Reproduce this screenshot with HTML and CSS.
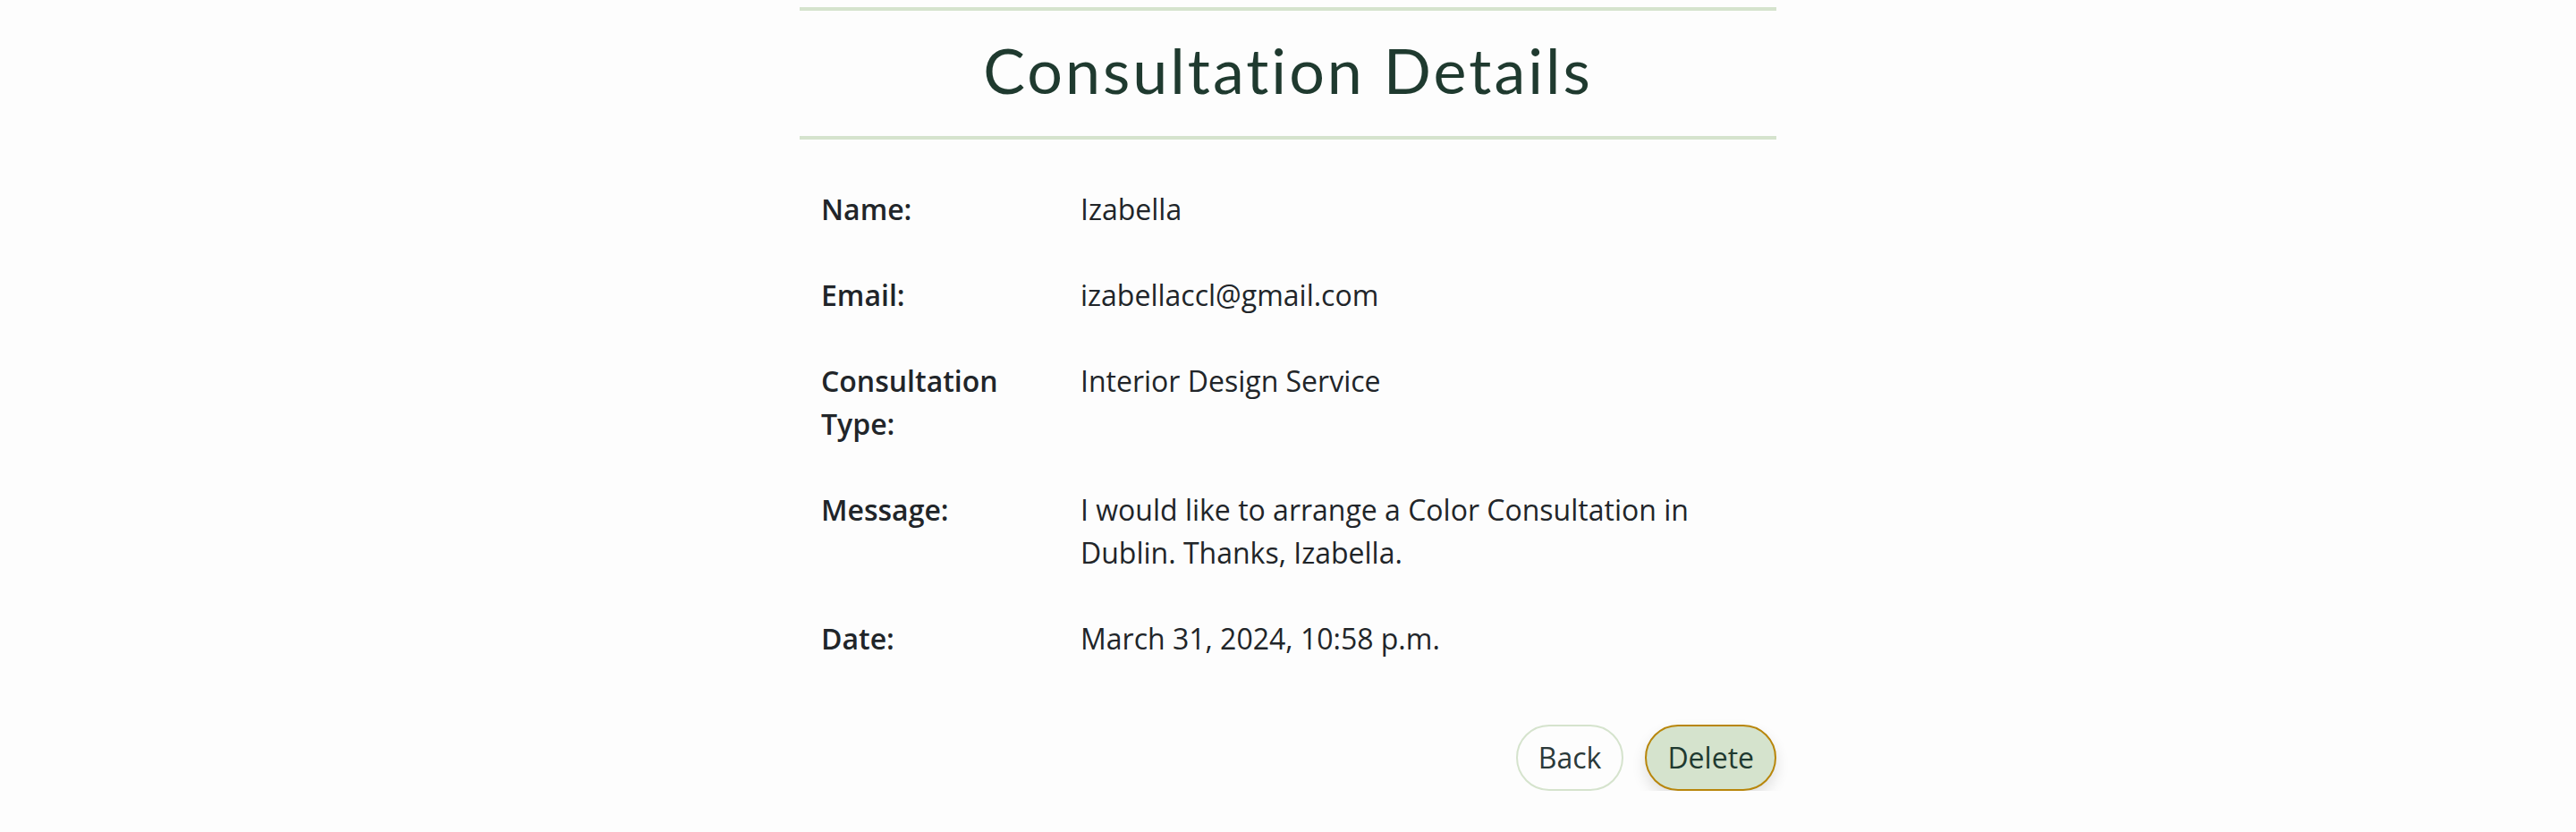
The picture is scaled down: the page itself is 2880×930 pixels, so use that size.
FILE: index.html
```html
<!DOCTYPE html>
<html lang="en">
<head>
<meta charset="utf-8">
<title>Consultation Details</title>
<link rel="stylesheet" href="styles.css">
</head>
<body>
<main class="page">
  <header class="title-bar">
    <h1 class="title">Consultation Details</h1>
  </header>
  <section class="details">
    <div class="row">
      <div class="label">Name:</div>
      <div class="value">Izabella</div>
    </div>
    <div class="row">
      <div class="label">Email:</div>
      <div class="value">izabellaccl@gmail.com</div>
    </div>
    <div class="row">
      <div class="label">Consultation Type:</div>
      <div class="value">Interior Design Service</div>
    </div>
    <div class="row">
      <div class="label">Message:</div>
      <div class="value">I would like to arrange a Color Consultation in Dublin. Thanks, Izabella.</div>
    </div>
    <div class="row">
      <div class="label">Date:</div>
      <div class="value">March 31, 2024, 10:58 p.m.</div>
    </div>
  </section>
  <div class="actions">
    <a class="btn btn-back" href="#">Back</a>
    <a class="btn btn-delete" href="#">Delete</a>
  </div>
</main>
</body>
</html>
```

FILE: styles.css
```css
html, body {
  margin: 0;
  padding: 0;
  background: #fdfdfd;
}

body {
  padding-top: 8px;
  font-family: "Open Sans", "Noto Sans", sans-serif;
  font-size: 32px;
  line-height: 48px;
  color: #212529;
}

.page {
  width: 1092px;
  margin: 0 auto;
}

.title-bar {
  border-top: 4px solid #d5e3cd;
  border-bottom: 4px solid #d5e3cd;
  height: 140px;
  display: flex;
  align-items: center;
  justify-content: center;
}

.title {
  margin: 0;
  font-family: "Lato", sans-serif;
  font-weight: 400;
  font-size: 70px;
  line-height: 80px;
  letter-spacing: 3px;
  color: #1f3a2f;
  padding-bottom: 8px;
}

.details {
  padding: 30px 24px 0;
}

.row {
  display: grid;
  grid-template-columns: 290px 1fr;
  padding: 24px 0;
}

.label {
  font-weight: 600;
  padding-right: 24px;
}

.value {
  font-weight: 400;
}

.actions {
  display: flex;
  justify-content: flex-end;
  gap: 24px;
  margin-top: 48px;
}

.btn {
  display: inline-block;
  text-decoration: none;
  font-size: 32px;
  line-height: 46px;
  padding: 12px 23px;
  border-radius: 37px;
  border: 2px solid #d5e3cd;
  color: #2b3a3a;
}

.btn-back {
  background: #fdfdfd;
}

.btn-delete {
  background: #d5e3cd;
  border-color: #b8860b;
  color: #1f3a30;
  box-shadow: 0 8px 16px rgba(0, 0, 0, 0.12);
}
```
